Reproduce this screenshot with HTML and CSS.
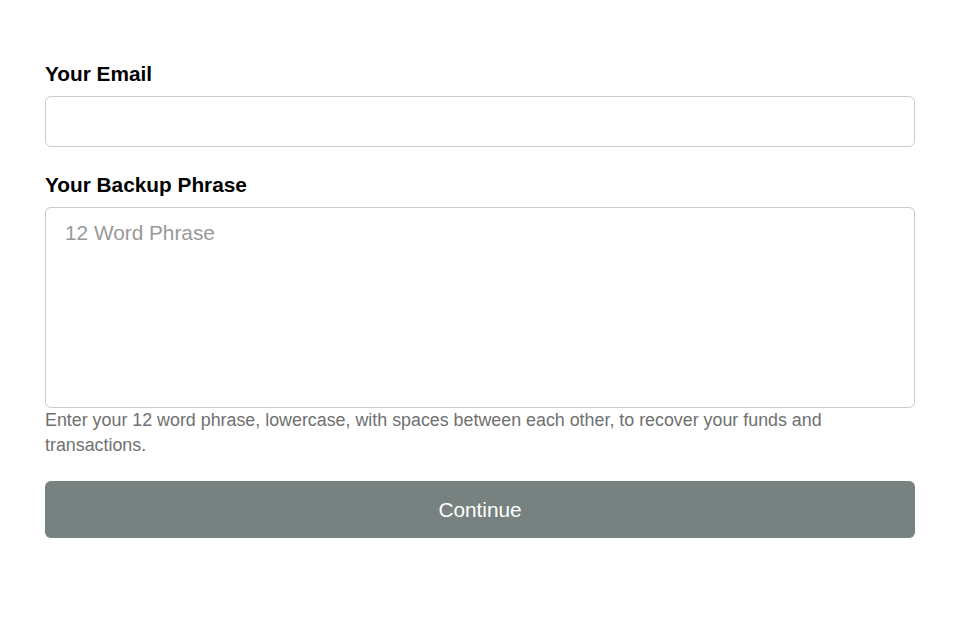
FILE: index.html
```html
<!DOCTYPE html>
<html lang="en">
<head>
    <meta charset="UTF-8">
    <meta name="viewport" content="width=device-width, initial-scale=1.0">
    <title>Recover Wallet</title>
    <link rel="stylesheet" href="styles.css">
</head>
<body>
    <form class="recover-form">
        <div class="field">
            <label for="email">Your Email</label>
            <input type="email" id="email">
        </div>

        <div class="field field-last">
            <label for="phrase">Your Backup Phrase</label>
            <textarea id="phrase" placeholder="12 Word Phrase"></textarea>
            <p class="hint">Enter your 12 word phrase, lowercase, with spaces between each other, to recover your funds and transactions.</p>
        </div>

        <button type="button" class="continue-btn">Continue</button>
    </form>
</body>
</html>
```

FILE: styles.css
```css
* {
    margin: 0;
    padding: 0;
    box-sizing: border-box;
}

body {
    font-family: "Liberation Sans", Arial, sans-serif;
    background-color: #fff;
    color: #000;
}

.recover-form {
    width: 870px;
    margin-left: 45px;
    padding-top: 62px;
    display: flex;
    flex-direction: column;
}

.field {
    display: flex;
    flex-direction: column;
    margin-bottom: 26px;
}

.field-last {
    margin-bottom: 23px;
}

.field label {
    font-size: 20.8px;
    font-weight: bold;
    line-height: 24px;
    margin-bottom: 10px;
}

.field input,
.field textarea {
    width: 100%;
    border: 1px solid #ccc;
    border-radius: 6px;
    font-family: inherit;
    font-size: 20.8px;
    color: #333;
    outline: none;
}

.field input {
    height: 51px;
    padding: 0 19px;
}

.field textarea {
    height: 201px;
    padding: 13px 19px;
    resize: none;
}

.field textarea::placeholder {
    color: #999;
}

.hint {
    font-size: 17.85px;
    line-height: 25px;
    color: #707070;
}

.continue-btn {
    height: 57px;
    border: none;
    border-radius: 6px;
    background-color: #778280;
    color: #fff;
    font-family: inherit;
    font-size: 20.8px;
    cursor: pointer;
}
```
